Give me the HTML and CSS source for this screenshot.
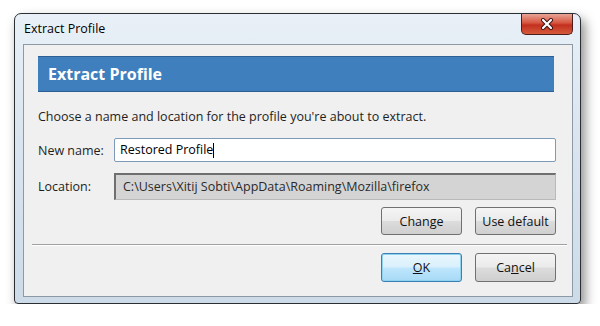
FILE: index.html
```html
<!DOCTYPE html>
<html lang="en">
<head>
    <meta charset="UTF-8">
    <title>Extract Profile</title>
    <link rel="stylesheet" href="styles.css">
</head>
<body>
    <div class="window">
        <div class="titlebar">
            <span class="title">Extract Profile</span>
            <div class="close-btn">
                <svg width="14" height="12" viewBox="0 0 14 12">
                    <path d="M3 2 L11 10 M11 2 L3 10" stroke="#3a1010" stroke-width="4" stroke-linecap="round"/>
                    <path d="M3 2 L11 10 M11 2 L3 10" stroke="#ffffff" stroke-width="2.2" stroke-linecap="round"/>
                </svg>
            </div>
        </div>
        <div class="client">
            <div class="banner">Extract Profile</div>
            <p class="intro">Choose a name and location for the profile you're about to extract.</p>
            <div class="field-row">
                <label class="field-label">New name:</label>
                <div class="text-input">Restored Profile<span class="caret"></span></div>
            </div>
            <div class="field-row">
                <label class="field-label">Location:</label>
                <div class="text-input readonly">C:\Users\Xitij Sobti\AppData\Roaming\Mozilla\firefox</div>
            </div>
            <div class="button-row">
                <button class="btn">Change</button>
                <button class="btn">Use default</button>
            </div>
            <div class="separator"></div>
            <div class="button-row footer">
                <button class="btn default"><u>O</u>K</button>
                <button class="btn">Ca<u>n</u>cel</button>
            </div>
        </div>
    </div>
</body>
</html>
```

FILE: styles.css
```css
html, body {
    margin: 0;
    padding: 0;
    background: #ffffff;
    font-family: "Open Sans", "Noto Sans", sans-serif;
    font-size: 12.5px;
    color: #1e1e1e;
}

.window {
    margin: 13px 0 0 14px;
    width: 565px;
    height: 289px;
    border: 1px solid #2b2f33;
    border-radius: 7px 7px 4px 4px;
    background: linear-gradient(to bottom, #e9f0f7 0%, #dae5f0 40%, #cddbe9 100%);
    box-shadow: 4px 6px 12px rgba(0, 0, 0, 0.45);
    display: flex;
    flex-direction: column;
}

.titlebar {
    height: 30px;
    display: flex;
    align-items: flex-start;
    justify-content: space-between;
    padding-left: 9px;
}

.title {
    margin-top: 6px;
    font-size: 12.5px;
    color: #000;
}

.close-btn {
    width: 50px;
    height: 20px;
    margin-right: 7px;
    border: 1px solid #4c1d1d;
    border-top: none;
    border-radius: 0 0 5px 5px;
    background: linear-gradient(to bottom, #e8a496 0%, #d6553f 45%, #c2301e 55%, #d55a3b 100%);
    display: flex;
    align-items: center;
    justify-content: center;
}

.client {
    flex: 1;
    margin: 0 7px 6px 8px;
    border: 1px solid #8d9aa6;
    background: #f0f0f0;
    padding: 11px 16px 0 14px;
    display: flex;
    flex-direction: column;
}

.banner {
    height: 34px;
    background: #3f7fbd;
    border-top: 1px solid #2d5f92;
    border-bottom: 1px solid #2d5f92;
    color: #ffffff;
    font-weight: bold;
    font-size: 16px;
    line-height: 34px;
    padding-left: 10px;
    margin-right: 2px;
}

.intro {
    margin: 16px 0 13px 0;
    line-height: 17px;
}

.field-row {
    display: flex;
    align-items: center;
    margin-bottom: 11px;
}

.field-label {
    width: 76px;
}

.text-input {
    flex: 1;
    height: 22px;
    line-height: 22px;
    padding-left: 5px;
    border: 1px solid #7d9bb8;
    border-radius: 2px;
    background: #ffffff;
    color: #000;
}

.caret {
    display: inline-block;
    width: 1px;
    height: 15px;
    background: #000;
    vertical-align: middle;
}

.text-input.readonly {
    height: 24px;
    line-height: 24px;
    padding-left: 7px;
    background: #d4d4d4;
    border: 1px solid #b9b9b9;
    border-top: 2px solid #6f6f6f;
    border-left: 2px solid #6f6f6f;
    border-radius: 0;
    color: #2a2a2a;
}

.button-row {
    display: flex;
    justify-content: flex-end;
    gap: 13px;
    margin-top: -4px;
}

.btn {
    width: 81px;
    height: 28px;
    font-family: inherit;
    font-size: 12.5px;
    color: #111;
    border: 1px solid #707070;
    border-radius: 3px;
    background: linear-gradient(to bottom, #f4f4f4 0%, #ebebeb 48%, #dcdcdc 52%, #cfcfcf 100%);
    padding: 0;
}

.footer {
    margin-top: 0;
}

.footer .btn {
    height: 29px;
}

.btn.default {
    border-color: #3c7fb1;
    box-shadow: inset 0 0 0 1px #8fd3f1;
    background: linear-gradient(to bottom, #eaf6fd 0%, #d9f0fc 48%, #bee6fd 52%, #a7d9f5 100%);
}

.separator {
    height: 1px;
    background: #a0a0a0;
    border-bottom: 1px solid #ffffff;
    margin: 9px -11px 7px -6px;
}
```
